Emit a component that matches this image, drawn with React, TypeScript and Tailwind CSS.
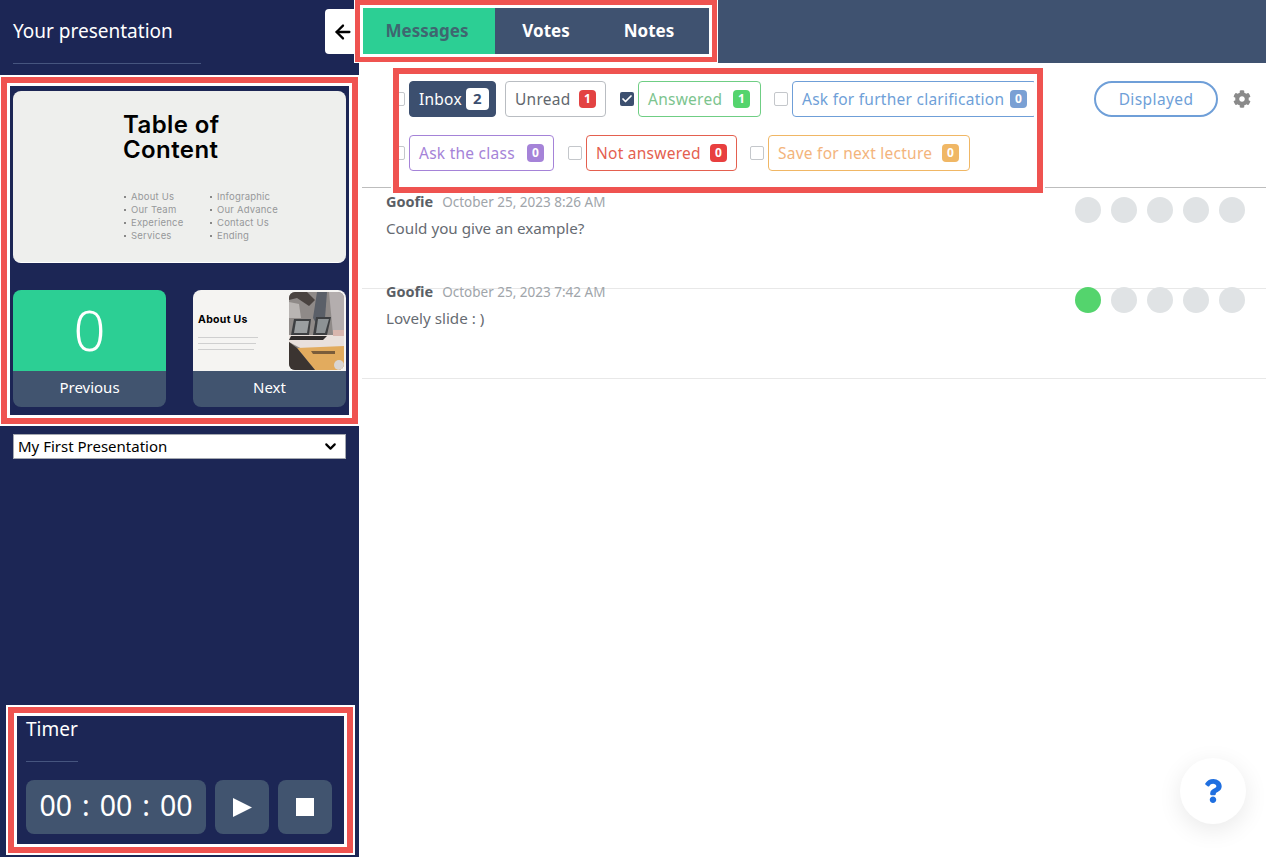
import { FaQuestion, FaCog } from "react-icons/fa";
import { ArrowLeft, ChevronDown, Check } from "lucide-react";

const annot = "border-[6px] border-[#ef5350] shadow-[0_0_0_2px_#ffffff,inset_0_0_0_3px_#ffffff]";

function Box({ checked }: { checked?: boolean }) {
  return checked ? (
    <span className="w-[14px] h-[14px] rounded-[2px] bg-[#3c4f6f] flex items-center justify-center shrink-0">
      <Check size={12} strokeWidth={3.5} color="#fff" />
    </span>
  ) : (
    <span className="w-[14px] h-[14px] rounded-[2px] border border-[#c4c7cb] bg-white shrink-0" />
  );
}

function Chip({ label, n, cls, badge, width }: { label: string; n: number; cls: string; badge: string; width: string }) {
  return (
    <div className={`h-[36px] rounded-[4px] border flex items-center justify-between pl-[9px] pb-px shrink-0 text-[15.5px] tracking-[0.25px] ${cls} ${width}`}>
      <span className="whitespace-nowrap leading-[22px]">{label}</span>
      <span className={`rounded-[4px] font-bold flex items-center justify-center ${badge}`}>{n}</span>
    </div>
  );
}

const smallBadge = "w-[17px] h-[18px] text-[12px] text-white";

function Dots({ first }: { first?: boolean }) {
  return (
    <div className="flex gap-[10px] shrink-0">
      {[0, 1, 2, 3, 4].map((i) => (
        <span key={i} className={i === 0 && first ? "w-[26px] h-[26px] rounded-full bg-[#54d46d]" : "w-[26px] h-[26px] rounded-full bg-[#e0e3e5]"} />
      ))}
    </div>
  );
}

function Message({ date, text, cls, textCls, dotCls, first }: { date: string; text: string; cls: string; textCls: string; dotCls: string; first?: boolean }) {
  return (
    <div className={`ml-[3px] flex justify-between pl-[24px] pr-[21px] ${cls}`}>
      <div className={textCls}>
        <div className="flex items-baseline gap-[9px] leading-[18px]">
          <span className="text-[14.5px] font-bold text-[#5a5f66]">Goofie</span>
          <span className="text-[13.5px] text-[#a0a5aa]">{date}</span>
        </div>
        <div className="mt-[7px] text-[15.2px] leading-[20px] text-[#666b72]">{text}</div>
      </div>
      <div className={dotCls}>
        <Dots first={first} />
      </div>
    </div>
  );
}

const tocA = ["About Us", "Our Team", "Experience", "Services"];
const tocB = ["Infographic", "Our Advance", "Contact Us", "Ending"];

function Toc({ items }: { items: string[] }) {
  return (
    <ul className="text-[9.5px] leading-[13px] text-[#96989a] tracking-[0.2px]">
      {items.map((t) => (
        <li key={t} className="flex items-center gap-[5px] whitespace-nowrap">
          <span className="w-[2px] h-[2px] rounded-full bg-[#666]" />
          {t}
        </li>
      ))}
    </ul>
  );
}

function Photo() {
  return (
    <svg width="55" height="78" viewBox="0 0 55 78" className="rounded-[6px] shrink-0">
      <rect width="55" height="78" fill="#8f8a88" />
      <path d="M40 0H55V42H44Z" fill="#b4aeae" />
      <path d="M0 0H18L26 8L20 14L8 6L0 8Z" fill="#4a4340" />
      <path d="M28 0H38L36 26L30 36L24 26Z" fill="#5a5f68" />
      <path d="M0 10L10 12L12 26H0Z" fill="#b9b5b3" />
      <path d="M5 27H22L20 43H2Z" fill="#3d3f42" />
      <path d="M7 29H20L18 41H5Z" fill="#9a9ea0" />
      <path d="M27 25H42L38 43H24Z" fill="#3d3f42" />
      <path d="M29 27H40L36 41H27Z" fill="#8d9295" />
      <path d="M0 43H55V58H15L0 50Z" fill="#e9e0dc" />
      <path d="M2 44H38L34 48H0Z" fill="#2f2c2c" />
      <path d="M44 38H55V44H44Z" fill="#d8b6ae" />
      <path d="M8 56L55 54V78H26Z" fill="#e2ab5e" />
      <path d="M0 50L8 56L26 78H0Z" fill="#3b3431" />
      <path d="M22 59H46V62H24Z" fill="#7a5c3a" />
      <circle cx="50" cy="73" r="5" fill="#d9d5d2" />
    </svg>
  );
}

export default function App() {
  return (
    <div className="relative flex w-[1266px] h-[857px] overflow-hidden bg-white font-['Noto_Sans','Liberation_Sans',sans-serif]">
      <aside className="w-[359px] h-full shrink-0 bg-[#1c2655] flex flex-col text-white">
        <header className="h-[74px] flex shrink-0">
          <div className="ml-[13px] w-[188px]">
            <h1 className="mt-[18px] text-[19px] leading-[26px] whitespace-nowrap">Your presentation</h1>
            <div className="mt-[19px] h-px bg-[#46557f]" />
          </div>
          <button className="ml-auto mr-px mt-[9px] w-[33px] h-[45px] bg-white rounded-l-[4px] flex items-center justify-center text-black">
            <ArrowLeft size={22} strokeWidth={2.5} className="ml-[2px]" />
          </button>
        </header>

        <section className={`ml-px mt-[3px] w-[357px] h-[347px] shrink-0 px-[6px] pt-[8px] ${annot}`}>
          <div className="h-[172px] rounded-[8px] bg-[#eeefed] text-black pl-[110px] pt-[21px] border-b border-white">
            <div className="text-[24px] leading-[25px] font-semibold tracking-[0.4px] font-['Inter',sans-serif]">
              Table of
              <br />
              Content
            </div>
            <div className="mt-[28px] ml-px flex gap-[25px] font-['Inter',sans-serif]">
              <div className="w-[61px]"><Toc items={tocA} /></div>
              <Toc items={tocB} />
            </div>
          </div>
          <div className="mt-[27px] flex gap-[27px]">
            <div className="w-[153px] h-[117px] rounded-[8px] overflow-hidden flex flex-col">
              <div className="h-[81px] bg-[#2ccf94] flex items-center justify-center text-[56px] font-light pb-[3px]">0</div>
              <div className="h-[36px] bg-[#41546f] flex items-center justify-center text-[15px] pb-[3px]">Previous</div>
            </div>
            <div className="w-[153px] h-[117px] rounded-[8px] overflow-hidden flex flex-col">
              <div className="h-[81px] bg-[#f5f4f2] flex items-center pl-[5px] pr-[2px] justify-between">
                <div className="text-black w-[64px] pt-[3px]">
                  <div className="text-[10.5px] leading-[12px] font-bold tracking-[0.3px] whitespace-nowrap font-['Inter',sans-serif]">About Us</div>
                  <div className="mt-[11px] flex flex-col gap-[5px]">
                    <span className="block h-px bg-[#cfcfcf] w-[60px]" />
                    <span className="block h-px bg-[#cfcfcf] w-[58px]" />
                    <span className="block h-px bg-[#cfcfcf] w-[56px]" />
                  </div>
                </div>
                <Photo />
              </div>
              <div className="h-[36px] bg-[#41546f] flex items-center justify-center text-[15px] pb-[3px]">Next</div>
            </div>
          </div>
        </section>

        <div className="ml-[13px] mt-[10px] w-[333px] h-[25px] shrink-0 bg-white border border-[#a4a8b0] flex items-center justify-between pl-[4px] pr-[6px] text-[15px] text-black">
          <span>My First Presentation</span>
          <ChevronDown size={17} strokeWidth={3} />
        </div>

        <section className={`mt-auto mb-[4px] ml-[8px] w-[345px] h-[146px] shrink-0 pl-[12px] pt-[3px] ${annot}`}>
          <div className="text-[19px] leading-[26px]">Timer</div>
          <div className="mt-[19px] w-[52px] h-px bg-[#46557f]" />
          <div className="mt-[18px] flex gap-[9px]">
            <div className="w-[180px] h-[54px] rounded-[8px] bg-[#41546f] flex items-center justify-center gap-[10px] text-[28.5px] pb-[4px]">
              <span>00</span><span>:</span><span>00</span><span>:</span><span>00</span>
            </div>
            <button className="w-[54px] h-[54px] rounded-[8px] bg-[#41546f] flex items-center justify-center">
              <svg width="19" height="19" viewBox="0 0 19 19"><polygon points="0,0 19,9.5 0,19" fill="#fff" /></svg>
            </button>
            <button className="w-[54px] h-[54px] rounded-[8px] bg-[#41546f] flex items-center justify-center">
              <span className="w-[18px] h-[18px] bg-white" />
            </button>
          </div>
        </section>
      </aside>

      <main className="flex-1 min-w-0 flex flex-col">
        <div className="h-[63px] bg-[#3f5270] shrink-0">
          <div className="relative -ml-[4px] w-[362px] h-[62px] border-[5px] border-[#ef5350] shadow-[0_0_0_1px_#ffffff,inset_0_0_0_3px_#ffffff] p-[3px]">
            <div className="flex h-full bg-[#3f5270] text-[17px] font-bold text-white">
              <div className="w-[132px] bg-[#2ccf94] text-[#3f6670] flex items-center justify-center pr-[4px]">Messages</div>
              <div className="w-[102px] flex items-center justify-center">Votes</div>
              <div className="w-[104px] flex items-center justify-center">Notes</div>
            </div>
          </div>
        </div>

        <div className="h-[125px] shrink-0 ml-[3px] border-b border-[#bdbdbd] flex items-start">
          <section className={`relative z-10 ml-[31px] mt-[5px] w-[650px] h-[125px] shrink-0 bg-white pt-[7px] ${annot}`}>
            <div className="w-[635px] overflow-hidden flex flex-col gap-[18px]">
              <div className="flex items-center -ml-[8px]">
                <Box />
                <div className="w-[4px] shrink-0" />
                <Chip label="Inbox" n={2} width="w-[87px] pr-[6px]" cls="bg-[#3c4f6f] border-[#3c4f6f] text-white" badge="w-[23px] h-[22px] bg-white text-[#3c4f6f] text-[15px]" />
                <div className="w-[9px] shrink-0" />
                <Chip label="Unread" n={1} width="w-[101px] pr-[9px]" cls="border-[#b9bdc2] text-[#62676e]" badge={`${smallBadge} bg-[#e34242]`} />
                <div className="w-[14px] shrink-0" />
                <Box checked />
                <div className="w-[4px] shrink-0" />
                <Chip label="Answered" n={1} width="w-[123px] pr-[10px]" cls="border-[#6fce84] text-[#7cc48e]" badge={`${smallBadge} bg-[#54d46d]`} />
                <div className="w-[13px] shrink-0" />
                <Box />
                <div className="w-[4px] shrink-0" />
                <Chip label="Ask for further clarification" n={0} width="w-[245px] pr-[9px]" cls="border-[#6f9fd8] text-[#6f9fd8]" badge={`${smallBadge} bg-[#7aa0d4]`} />
              </div>
              <div className="flex items-center -ml-[8px]">
                <Box />
                <div className="w-[4px] shrink-0" />
                <Chip label="Ask the class" n={0} width="w-[145px] pr-[9px]" cls="border-[#a583d8] text-[#a583d8]" badge={`${smallBadge} bg-[#a583d8]`} />
                <div className="w-[14px] shrink-0" />
                <Box />
                <div className="w-[4px] shrink-0" />
                <Chip label="Not answered" n={0} width="w-[151px] pr-[9px]" cls="border-[#e4604f] text-[#e4604f]" badge={`${smallBadge} bg-[#e83f3f]`} />
                <div className="w-[13px] shrink-0" />
                <Box />
                <div className="w-[4px] shrink-0" />
                <Chip label="Save for next lecture" n={0} width="w-[202px] pr-[10px]" cls="border-[#f0b765] text-[#f3b47c]" badge={`${smallBadge} bg-[#f0b765]`} />
              </div>
            </div>
          </section>
          <button className="ml-[51px] mt-[18px] w-[124px] h-[36px] rounded-full border-2 border-[#6f9fd8] text-[#6f9fd8] text-[15.5px] leading-[22px] tracking-[0.4px] shrink-0 pb-[1px]">Displayed</button>
          <FaCog size={18} color="#8a8a8a" className="ml-[15px] mt-[27px] shrink-0" />
        </div>

        <Message cls="h-[101px] border-b border-[#e8e8e8] pt-[4px]" textCls="" dotCls="pt-[5px]" date="October 25, 2023 8:26 AM" text="Could you give an example?" />
        <Message cls="h-[91px] border-b border-[#e8e8e8] -mt-px" textCls="-mt-[6px]" dotCls="-mt-[1px]" first date="October 25, 2023 7:42 AM" text="Lovely slide : )" />
      </main>

      <button className="absolute left-[1180px] top-[758px] w-[66px] h-[66px] rounded-full bg-white shadow-[0_6px_24px_rgba(0,0,0,0.09)] flex items-center justify-center">
        <FaQuestion size={24} color="#1f6fe0" />
      </button>
    </div>
  );
}
